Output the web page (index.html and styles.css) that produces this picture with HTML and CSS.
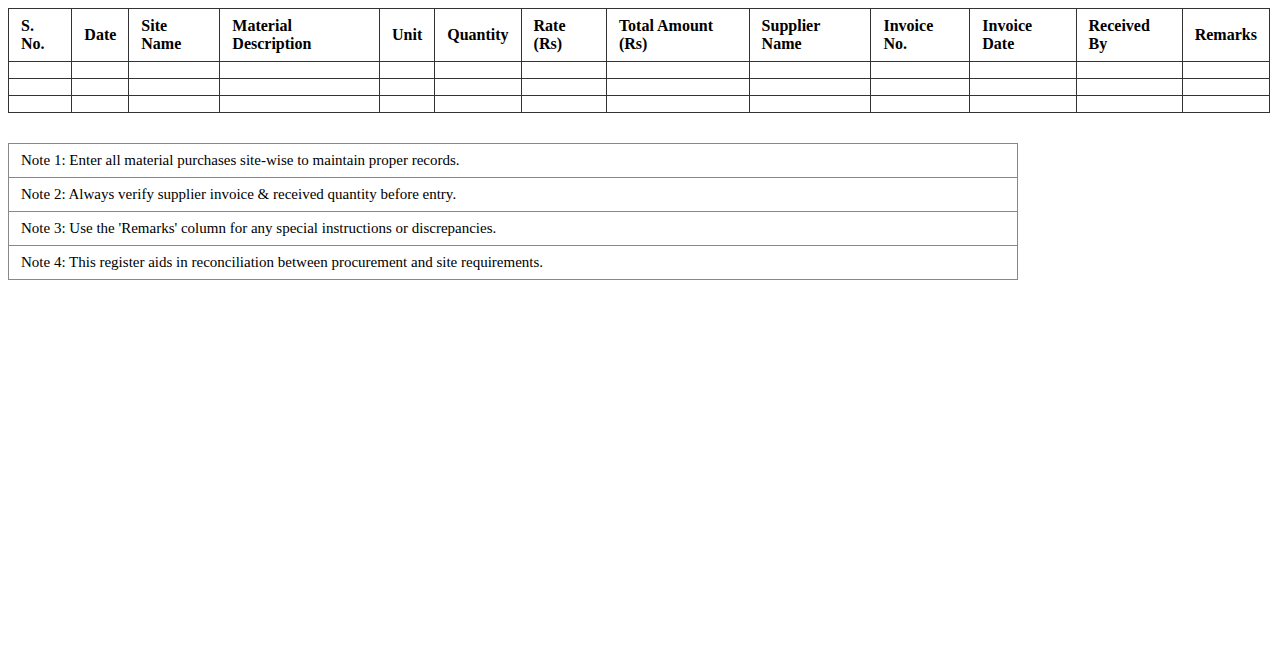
FILE: index.html
```html
<!DOCTYPE html>
<html>
<head>
<meta charset="utf-8">
<link rel="stylesheet" href="styles.css">
</head>
<body>
<table class="register">
  <thead>
    <tr>
      <th>S. No.</th>
      <th>Date</th>
      <th>Site Name</th>
      <th>Material Description</th>
      <th>Unit</th>
      <th>Quantity</th>
      <th>Rate (Rs)</th>
      <th>Total Amount (Rs)</th>
      <th>Supplier Name</th>
      <th>Invoice No.</th>
      <th>Invoice Date</th>
      <th>Received By</th>
      <th>Remarks</th>
    </tr>
  </thead>
  <tbody>
    <tr><td></td><td></td><td></td><td></td><td></td><td></td><td></td><td></td><td></td><td></td><td></td><td></td><td></td></tr>
    <tr><td></td><td></td><td></td><td></td><td></td><td></td><td></td><td></td><td></td><td></td><td></td><td></td><td></td></tr>
    <tr><td></td><td></td><td></td><td></td><td></td><td></td><td></td><td></td><td></td><td></td><td></td><td></td><td></td></tr>
  </tbody>
</table>
<div class="notes">
  <div class="note">Note 1: Enter all material purchases site-wise to maintain proper records.</div>
  <div class="note">Note 2: Always verify supplier invoice &amp; received quantity before entry.</div>
  <div class="note">Note 3: Use the 'Remarks' column for any special instructions or discrepancies.</div>
  <div class="note">Note 4: This register aids in reconciliation between procurement and site requirements.</div>
</div>
</body>
</html>
```
FILE: styles.css
```css
body {
  margin: 8px;
  font-family: "Liberation Serif", "Times New Roman", serif;
  color: #000;
  background: #fff;
}
.register {
  width: 100%;
  border-collapse: collapse;
}
.register th,
.register td {
  border: 1px solid #333;
  padding: 8px 12px;
  text-align: left;
  font-size: 16px;
}
.register th {
  font-weight: bold;
  vertical-align: middle;
}
.notes {
  box-sizing: border-box;
  width: 80%;
  margin-top: 30px;
  border: 1px solid #888;
}
.note {
  padding: 8px 12px;
  font-size: 15px;
  line-height: 17px;
  border-top: 1px solid #888;
}
.note:first-child {
  border-top: none;
}
```
